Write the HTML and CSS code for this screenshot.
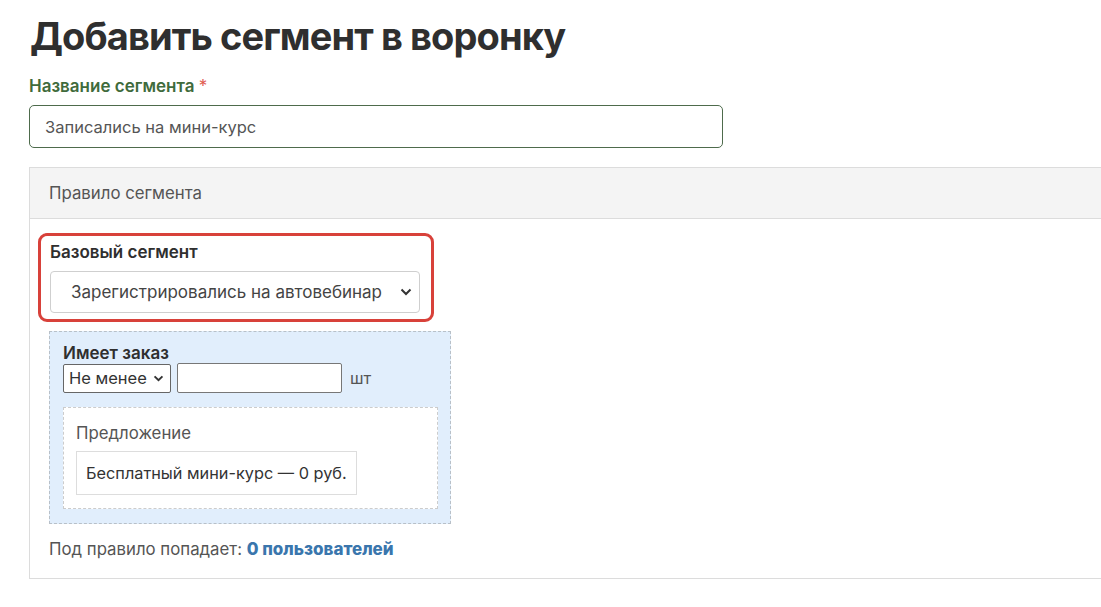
FILE: index.html
```html
<!DOCTYPE html>
<html lang="ru">
<head>
    <meta charset="UTF-8" />
    <meta name="viewport" content="width=device-width, initial-scale=1.0" />
    <title>Добавить сегмент в воронку</title>
    <link rel="stylesheet" href="styles.css">
</head>
<body>
    <h1 class="page-title">Добавить сегмент в воронку</h1>

    <!-- Segment name -->
    <div class="field">
        <label class="field-label">Название сегмента <span class="req">*</span></label>
        <input class="name-input" type="text" value="Записались на мини-курс">
    </div>

    <!-- Segment rule panel -->
    <div class="rule-panel">
        <div class="rule-head">Правило сегмента</div>
        <div class="rule-body">
            <div class="base-box">
                <div class="base-label">Базовый сегмент</div>
                <div class="base-select">
                    <span>Зарегистрировались на автовебинар</span>
                    <svg width="12" height="8" viewBox="0 0 12 8"><path d="M1.5 1.5 L6 6 L10.5 1.5" fill="none" stroke="#333" stroke-width="2"/></svg>
                </div>
            </div>

            <div class="order-box">
                <div class="order-label">Имеет заказ</div>
                <div class="order-row">
                    <div class="small-select">
                        <span>Не менее</span>
                        <svg width="11" height="7" viewBox="0 0 12 8"><path d="M1.5 1.5 L6 6 L10.5 1.5" fill="none" stroke="#333" stroke-width="2.2"/></svg>
                    </div>
                    <div class="count-input"></div>
                    <span class="unit">шт</span>
                </div>
                <div class="offer-box">
                    <div class="offer-label">Предложение</div>
                    <div class="offer-item">Бесплатный мини-курс — 0 руб.</div>
                </div>
            </div>

            <div class="rule-count">Под правило попадает: <a href="#">0 пользователей</a></div>
        </div>
    </div>
</body>
</html>
```

FILE: styles.css
```css
body {
    margin: 0;
    padding: 0 0 0 29px;
    font-family: Inter, "Noto Sans", sans-serif;
    color: #333;
    background: #fff;
    overflow: hidden;
}

.page-title {
    margin: 10px 0 0 1px;
    font-size: 38px;
    font-weight: 700;
    line-height: 52px;
    color: #2f2f2f;
    letter-spacing: -0.9px;
}

/* Name field */
.field {
    margin-top: 14px;
}

.field-label {
    display: block;
    font-size: 17px;
    font-weight: 600;
    color: #3f6b3c;
    line-height: 20px;
    margin-bottom: 9px;
}

.req {
    color: #e05a4f;
    font-weight: 400;
}

.name-input {
    box-sizing: border-box;
    width: 694px;
    height: 43px;
    border: 1px solid #4e6b4c;
    border-radius: 5px;
    padding: 0 15px;
    font-family: inherit;
    font-size: 16.5px;
    color: #555;
    outline: none;
}

/* Rule panel */
.rule-panel {
    margin-top: 19px;
    border: 1px solid #dcdcdc;
    border-right: none;
    height: 412px;
    box-sizing: border-box;
}

.rule-head {
    background: #f4f4f4;
    border-bottom: 1px solid #dcdcdc;
    height: 50px;
    line-height: 50px;
    padding-left: 19px;
    font-size: 16.8px;
    color: #555;
}

.rule-body {
    padding: 14px 0 0 8px;
}

.base-box {
    width: 396px;
    height: 89px;
    box-sizing: border-box;
    border: 3px solid #d8413a;
    border-radius: 9px;
    padding: 4px 11px 0 9px;
}

.base-label {
    font-size: 17px;
    font-weight: 600;
    line-height: 24px;
    color: #2f2f2f;
}

.base-select {
    margin-top: 7px;
    height: 42px;
    box-sizing: border-box;
    border: 1px solid #cfcfcf;
    border-radius: 4px;
    display: flex;
    align-items: center;
    justify-content: space-between;
    padding: 0 7px 0 20px;
    font-size: 17px;
    color: #444;
}

/* Order condition */
.order-box {
    margin: 9px 0 0 11px;
    width: 402px;
    height: 193px;
    box-sizing: border-box;
    background: #e1eefc;
    border: 1px dashed #b8c0c8;
    padding: 11px 12px 0 13px;
}

.order-label {
    font-size: 17px;
    font-weight: 600;
    line-height: 20px;
    color: #2f2f2f;
}

.order-row {
    display: flex;
    align-items: center;
    gap: 6px;
}

.small-select {
    width: 108px;
    height: 29px;
    box-sizing: border-box;
    background: #fff;
    border: 1px solid #666;
    border-radius: 2px;
    display: flex;
    align-items: center;
    justify-content: space-between;
    padding: 0 6px 0 5px;
    font-size: 16.5px;
    color: #333;
}

.count-input {
    width: 165px;
    height: 30px;
    box-sizing: border-box;
    background: #fff;
    border: 1px solid #777;
    border-radius: 2px;
}

.unit {
    margin-left: 2px;
    font-size: 16.5px;
    color: #555;
}

.offer-box {
    margin-top: 14px;
    height: 102px;
    box-sizing: border-box;
    background: #fff;
    border: 1px dashed #ccc;
    padding: 14px 12px 0 12px;
}

.offer-label {
    font-size: 16.8px;
    color: #555;
    line-height: 22px;
}

.offer-item {
    display: inline-block;
    margin-top: 7px;
    height: 44px;
    line-height: 42px;
    box-sizing: border-box;
    border: 1px solid #ddd;
    padding: 0 9px;
    font-size: 16.3px;
    color: #333;
}

.rule-count {
    margin-top: 15px;
    margin-left: 11px;
    font-size: 16.8px;
    color: #555;
}

.rule-count a {
    color: #3a76ad;
    font-weight: 800;
    font-size: 17px;
    text-decoration: none;
}
```
